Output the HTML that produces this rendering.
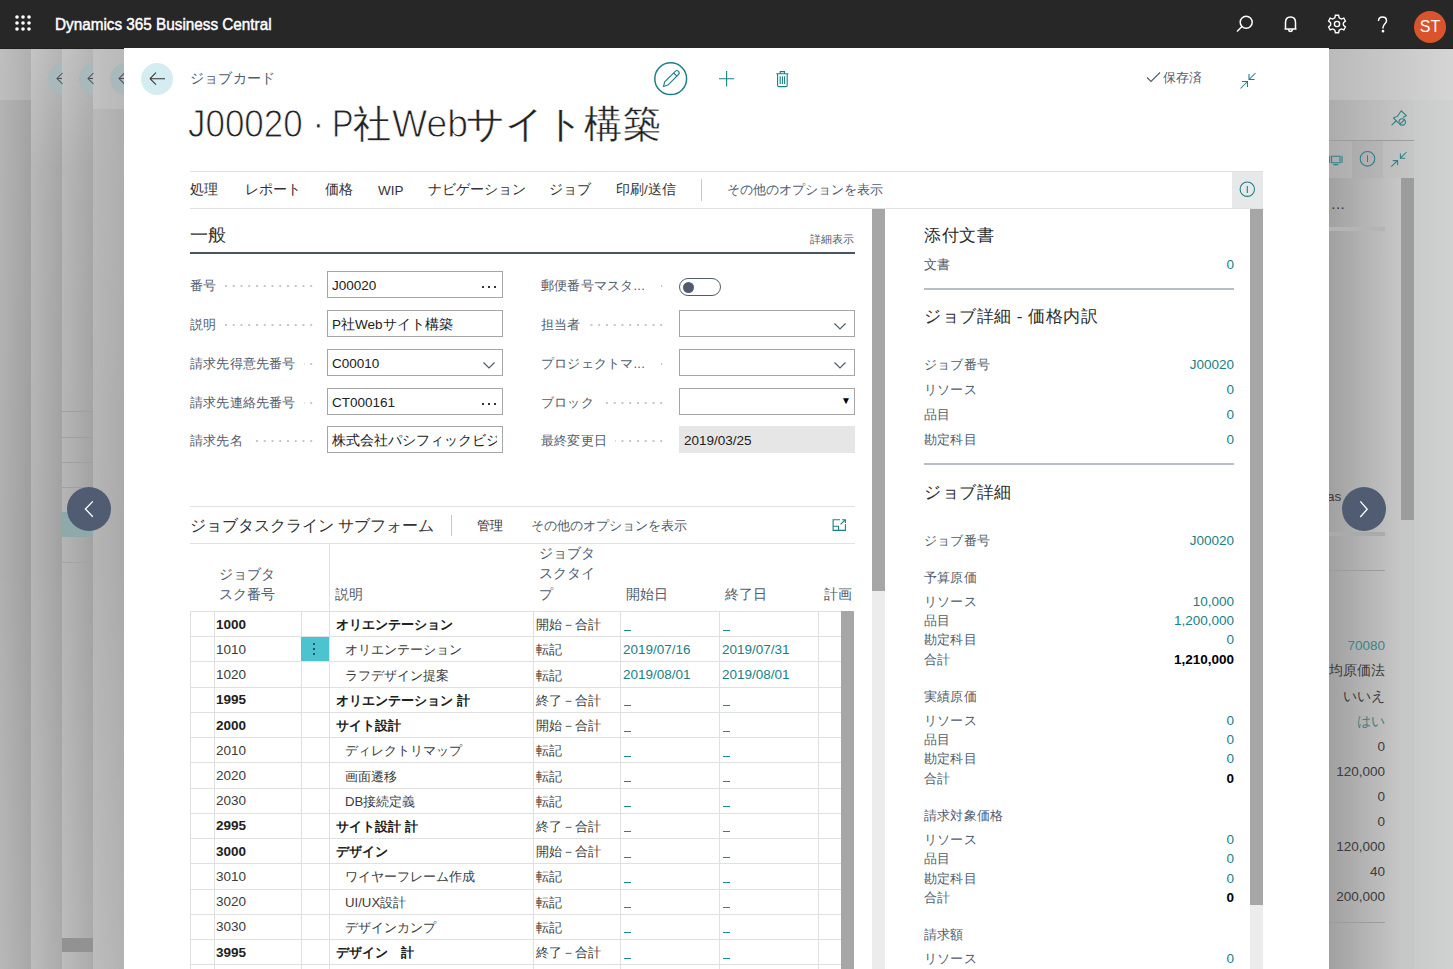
<!DOCTYPE html>
<html><head><meta charset="utf-8">
<style>
*{box-sizing:border-box;margin:0;padding:0}
html,body{width:1453px;height:969px;overflow:hidden;background:#b4b4b4;font-family:"Liberation Sans",sans-serif;color:#212121}
.a{position:absolute;white-space:nowrap}
#top{position:absolute;left:0;top:0;width:1453px;height:49px;background:#272727;border-bottom:1px solid #1f1f1f}
#card{position:absolute;left:124px;top:48px;width:1205px;height:921px;background:#fff;overflow:hidden}
.lbl{color:#505c6d;font-size:13.2px;letter-spacing:0.2px}
.dots{background-image:linear-gradient(90deg,#c6c6c6 1.6px,transparent 1.6px);background-size:7.75px 2px;background-position:right 0 top 0;background-repeat:repeat-x}
.teal{color:#00838a}
</style></head>
<body>
<!-- background strips -->
<div class="a" style="left:0;top:48px;width:31px;height:921px;background:linear-gradient(90deg,#b0b0b0,#9e9e9e)"></div>
<div class="a" style="left:31px;top:48px;width:31px;height:921px;background:linear-gradient(90deg,#b5b5b5,#a1a1a1)"></div>
<div class="a" style="left:62px;top:48px;width:31px;height:921px;background:linear-gradient(90deg,#b5b5b5,#a2a2a2)"></div>
<div class="a" style="left:93px;top:48px;width:31px;height:921px;background:linear-gradient(90deg,#b5b5b5,#aaaaaa)"></div>
<div class="a" style="left:0;top:48px;width:124px;height:921px;background:linear-gradient(180deg,rgba(255,255,255,.06),rgba(255,255,255,0) 55%,rgba(255,255,255,.1))"></div>
<div class="a" style="left:0;top:48px;width:31px;height:52px;background:rgba(255,255,255,.14)"></div>
<div class="a" style="left:31px;top:48px;width:62px;height:120px;background:linear-gradient(180deg,rgba(255,255,255,.16),rgba(255,255,255,0))"></div>
<div class="a" style="left:93px;top:48px;width:31px;height:61px;background:rgba(255,255,255,.13)"></div>
<div class="a" style="left:48px;top:63px;width:32px;height:32px;border-radius:50%;background:#a9b8ba;clip-path:inset(0 18px 0 0)"></div>
<div class="a" style="left:79px;top:63px;width:32px;height:32px;border-radius:50%;background:#a9b8ba;clip-path:inset(0 18px 0 0)"></div>
<div class="a" style="left:110px;top:63px;width:32px;height:32px;border-radius:50%;background:#a9b8ba;clip-path:inset(0 18px 0 0)"></div>
<svg class="a" style="left:0;top:48px" width="124" height="60" viewBox="0 48 124 60" fill="none" stroke="#4c5154" stroke-width="1.05"><path d="M62.5 73L57 78.5L62.5 84M62 78.5H57.5 M93.5 73L88 78.5L93.5 84M93 78.5H88.5 M124.5 73L119 78.5L124.5 84M124 78.5H119.5"/></svg>
<div class="a" style="left:62px;top:411px;width:31px;height:1px;background:#9f9f9f"></div>
<div class="a" style="left:62px;top:437px;width:31px;height:1px;background:#9f9f9f"></div>
<div class="a" style="left:62px;top:462px;width:31px;height:1px;background:#9f9f9f"></div>
<div class="a" style="left:62px;top:487px;width:31px;height:1px;background:#9f9f9f"></div>
<div class="a" style="left:62px;top:512px;width:31px;height:25px;background:#8fa9aa"></div>
<div class="a" style="left:62px;top:562px;width:31px;height:1px;background:#a3a3a3"></div>
<div class="a" style="left:62px;top:938px;width:31px;height:14px;background:#929292"></div>

<div class="a" style="left:1329px;top:48px;width:124px;height:921px;background:linear-gradient(90deg,#a0a0a0,#c7c7c7 72px,#c9caca 85px,#d0d1d1)"></div>
<div class="a" style="left:1329px;top:48px;width:124px;height:52px;background:linear-gradient(90deg,#bababa,#d5d5d5)"></div>
<div class="a" style="left:1329px;top:100px;width:85px;height:40px;background:linear-gradient(90deg,#acacac,#c9c9c9)"></div>
<div class="a" style="left:1329px;top:140px;width:85px;height:1px;background:#9c9c9c"></div>
<div class="a" style="left:1329px;top:141px;width:85px;height:37px;background:linear-gradient(90deg,#acacac,#c6c6c6)"></div>
<div class="a" style="left:1352px;top:141px;width:31px;height:37px;background:rgba(0,0,0,.035)"></div>
<div class="a" style="left:1401px;top:178px;width:13px;height:342px;background:#9c9c9c"></div>
<div class="a" style="left:1401px;top:520px;width:13px;height:449px;background:#c6c7c7"></div>
<div class="a" style="left:1329px;top:227px;width:56px;height:4px;background:#b4b4b4"></div>
<div class="a" style="left:1329px;top:532px;width:56px;height:4px;background:#aaaaaa"></div>
<div class="a" style="left:1329px;top:570px;width:56px;height:1px;background:#9c9c9c"></div>
<div class="a" style="left:1329px;top:922px;width:56px;height:1px;background:#9c9c9c"></div>
<div class="a" style="left:1331px;top:199px;font-size:14px;color:#333;letter-spacing:0">&middot;&middot;&middot;</div>
<div class="a" style="left:1327px;top:489px;font-size:13.5px;color:#3b3b3b">as</div>
<svg class="a" style="left:1329px;top:100px" width="90" height="80" viewBox="1329 100 90 80" fill="none" stroke="#2b8185" stroke-width="1.05">
<path d="M1391.5 125.3L1396 121 M1393.3 117.8L1397.4 116.4L1401.3 110.8L1406.3 115.6L1403 117.5 M1393.3 117.8L1398.6 123.2"/>
<circle cx="1402.2" cy="121.9" r="3.2"/><path d="M1400 124L1404.4 119.8"/>
<circle cx="1367.5" cy="158.8" r="7.3"/><path d="M1367.5 155.3V162"/>
<path d="M1391.2 166.6L1397.6 160.6M1392.8 160.6H1397.6V165.2 M1406.6 152L1400.4 158.2M1400.4 153.4V158.2H1405.2"/>
<path d="M1329.6 155.8V163 M1331.6 156.2H1340V162.8H1331.6Z M1333.4 164.6H1338.2 M1342 155.8V163"/>
</svg>
<div class="a" style="right:68px;top:637px;line-height:18px;font-size:13.5px;color:#3f8284">70080</div>
<div class="a" style="right:68px;top:662px;line-height:18px;font-size:13.5px;color:#3b3b3b">均原価法</div>
<div class="a" style="right:68px;top:688px;line-height:18px;font-size:13.5px;color:#3b3b3b">いいえ</div>
<div class="a" style="right:68px;top:713px;line-height:18px;font-size:13.5px;color:#3f8284">はい</div>
<div class="a" style="right:68px;top:738px;line-height:18px;font-size:13.5px;color:#3b3b3b">0</div>
<div class="a" style="right:68px;top:763px;line-height:18px;font-size:13.5px;color:#3b3b3b">120,000</div>
<div class="a" style="right:68px;top:788px;line-height:18px;font-size:13.5px;color:#3b3b3b">0</div>
<div class="a" style="right:68px;top:813px;line-height:18px;font-size:13.5px;color:#3b3b3b">0</div>
<div class="a" style="right:68px;top:838px;line-height:18px;font-size:13.5px;color:#3b3b3b">120,000</div>
<div class="a" style="right:68px;top:863px;line-height:18px;font-size:13.5px;color:#3b3b3b">40</div>
<div class="a" style="right:68px;top:888px;line-height:18px;font-size:13.5px;color:#3b3b3b">200,000</div>
<div id="top">
  <svg class="a" style="left:15px;top:15px" width="18" height="18" viewBox="0 0 18 18" fill="#fff">
    <circle cx="2" cy="2" r="1.8"/><circle cx="8" cy="2" r="1.8"/><circle cx="14" cy="2" r="1.8"/>
    <circle cx="2" cy="8" r="1.8"/><circle cx="8" cy="8" r="1.8"/><circle cx="14" cy="8" r="1.8"/>
    <circle cx="2" cy="14" r="1.8"/><circle cx="8" cy="14" r="1.8"/><circle cx="14" cy="14" r="1.8"/>
  </svg>
  <div class="a" style="left:55px;top:16px;font-size:16px;color:#fff;-webkit-text-stroke:0.45px #fff;transform-origin:0 0;transform:scaleX(0.955)">Dynamics 365 Business Central</div>
  <svg class="a" style="left:1233px;top:12px" width="24" height="24" viewBox="0 0 24 24" fill="none" stroke="#fff" stroke-width="1.5"><circle cx="13.2" cy="10.3" r="6"/><path d="M9 14.5L4 19.5"/></svg>
<svg class="a" style="left:1279px;top:12px" width="24" height="24" viewBox="0 0 24 24" fill="none" stroke="#fff" stroke-width="1.5"><path d="M6.5 17V10.5C6.5 7 8.7 5 11.5 5C14.3 5 16.5 7 16.5 10.5V17Z M5.5 17H17.5 M9.5 17.5C9.8 19 10.5 19.5 11.5 19.5C12.5 19.5 13.2 19 13.5 17.5"/></svg>
<svg class="a" style="left:1325px;top:12px" width="24" height="24" viewBox="-12 -12 24 24" fill="none" stroke="#fff" stroke-width="1.4"><path d="M-1.6,-8.2 L1.6,-8.2 L2.2,-5.6 L4.3,-4.4 L6.8,-5.3 L8.4,-2.5 L6.4,-0.7 L6.4,1.7 L8.4,3.5 L6.8,6.3 L4.3,5.4 L2.2,6.6 L1.6,9.2 L-1.6,9.2 L-2.2,6.6 L-4.3,5.4 L-6.8,6.3 L-8.4,3.5 L-6.4,1.7 L-6.4,-0.7 L-8.4,-2.5 L-6.8,-5.3 L-4.3,-4.4 L-2.2,-5.6 Z" transform="translate(0,-0.5)"/><circle cx="0" cy="0" r="2.6"/></svg>
<svg class="a" style="left:1371px;top:12px" width="24" height="24" viewBox="0 0 24 24" fill="none" stroke="#fff" stroke-width="1.5"><path d="M7.5 9C7.5 6.5 9.3 5 11.5 5C13.8 5 15.5 6.5 15.5 8.7C15.5 11.5 12 12 12 15.5V16.5"/><circle cx="12" cy="19.2" r="0.6" fill="#fff"/></svg>
<div class="a" style="left:1414px;top:11px;width:32px;height:32px;border-radius:50%;background:#d9542b;color:#fff;font-size:16px;text-align:center;line-height:32px">ST</div>
</div>

<div id="card"></div>
<!-- card header -->
<div class="a" style="left:141px;top:62.7px;width:32px;height:32px;border-radius:50%;background:#d4edf1"></div>
<svg class="a" style="left:147px;top:69px" width="20" height="20" viewBox="0 0 20 20" fill="none" stroke="#333" stroke-width="1.05"><path d="M3 9.7H18M3 9.7L9 3.7M3 9.7L9 15.7"/></svg>
<div class="a lbl" style="left:190px;top:70px;line-height:18px;font-size:13.5px">ジョブカード</div>
<svg class="a" style="left:650px;top:58px" width="160" height="42" viewBox="650 58 160 42" fill="none" stroke="#1a7f86" stroke-width="1.2">
<circle cx="670.7" cy="78.7" r="15.9" stroke-width="1.5"/>
<path d="M663.5 86.5L664.7 81.9L675.3 71.3Q676.9 69.7 678.5 71.3Q680.1 72.9 678.5 74.5L667.9 85.1Z M673.6 73L676.8 76.2" stroke-width="1.1"/>
<path d="M726.6 71V86.5M719 78.7H734.2" stroke-width="1.1"/>
<path d="M776.3 73.8H788.4M780.2 73.8V71.6H784.5V73.8M777.6 73.8V85.2Q777.6 86.6 779 86.6H785.8Q787.2 86.6 787.2 85.2V73.8M780.2 76.2V84M782.4 76.2V84M784.6 76.2V84" stroke-width="1.1"/>
</svg>
<svg class="a" style="left:1144px;top:70px" width="18" height="16" viewBox="0 0 18 16" fill="none" stroke="#505c6d" stroke-width="1.1"><path d="M3 7.5L7 11.5L16 2.5"/></svg>
<div class="a lbl" style="left:1163px;top:69px;line-height:18px;font-size:13.3px">保存済</div>
<svg class="a" style="left:1236px;top:68px" width="24" height="24" viewBox="1236 68 24 24" fill="none" stroke="#1a7f86" stroke-width="1.05"><path d="M1240.5 88.5L1247.5 81.5M1242 81.5H1247.5V87 M1255.5 73L1249 79.5M1249 74V79.5H1254.5"/></svg>
<div class="a" style="left:188px;top:104px;font-size:38px;line-height:40px;color:#222;-webkit-text-stroke:0.9px #fff;transform-origin:0 0;transform:scaleX(0.92)">J00020</div>
<div class="a" style="left:312px;top:104px;font-size:38px;line-height:40px;color:#222;-webkit-text-stroke:0.9px #fff">&middot;</div>
<div class="a" style="left:332px;top:104px;font-size:38px;line-height:40px;color:#222;-webkit-text-stroke:0.9px #fff;transform-origin:0 0;transform:scaleX(0.85)">P</div>
<div class="a" style="left:353px;top:104px;font-size:38px;line-height:40px;color:#222;-webkit-text-stroke:0.3px #fff">社</div>
<div class="a" style="left:392px;top:104px;font-size:38px;line-height:40px;color:#222;-webkit-text-stroke:0.9px #fff;transform-origin:0 0;transform:scaleX(0.98)">Web</div>
<div class="a" style="left:466px;top:104px;font-size:38px;line-height:40px;color:#222;-webkit-text-stroke:0.3px #fff;letter-spacing:0.4px">サイト構築</div>


<!-- action bar -->
<div class="a" style="left:190px;top:171px;width:1073px;height:1px;background:#e1e1e1"></div>
<div class="a" style="left:190px;top:208px;width:1073px;height:1px;background:#e1e1e1"></div>
<div class="a" style="left:1232px;top:172px;width:31px;height:36px;background:#e7e8ea"></div>
<svg class="a" style="left:1237px;top:179px" width="20" height="20" viewBox="0 0 20 20" fill="none" stroke="#1a7f86" stroke-width="1.1"><circle cx="10.3" cy="10.2" r="7.2"/><path d="M10.3 7V14"/></svg>
<div class="a" style="left:190px;top:181px;font-size:13.5px;color:#333">処理</div>
<div class="a" style="left:245px;top:181px;font-size:13.5px;color:#333">レポート</div>
<div class="a" style="left:325px;top:181px;font-size:13.5px;color:#333">価格</div>
<div class="a" style="left:378px;top:183px;font-size:13.5px;color:#333">WIP</div>
<div class="a" style="left:428px;top:181px;font-size:13.5px;color:#333">ナビゲーション</div>
<div class="a" style="left:549px;top:181px;font-size:13.5px;color:#333">ジョブ</div>
<div class="a" style="left:616px;top:181px;font-size:13.5px;color:#333">印刷/送信</div>
<div class="a" style="left:701px;top:179px;width:1px;height:22px;background:#c8c8c8"></div>
<div class="a" style="left:727px;top:181px;font-size:13.2px;color:#505c6d">その他のオプションを表示</div>
<!-- general -->
<div class="a" style="left:190px;top:225px;line-height:20px;font-size:17.5px;color:#333">一般</div>
<div class="a" style="right:599px;top:232px;line-height:14px;font-size:11.3px;color:#505c6d">詳細表示</div>
<div class="a" style="left:190px;top:252px;width:665px;height:2px;background:#4a5468"></div>
<!-- SCROLLBARS -->
<div class="a" style="left:872px;top:209px;width:13px;height:760px;background:#ececec"></div>
<div class="a" style="left:872px;top:209px;width:13px;height:382px;background:#a6a6a6"></div>
<div class="a" style="left:1250px;top:209px;width:13px;height:760px;background:#ececec"></div>
<div class="a" style="left:1250px;top:209px;width:13px;height:696px;background:#a6a6a6"></div>
<!-- FIELDS -->
<div class="a dots" style="left:190px;top:285px;width:128px;height:2px"></div><div class="a lbl" style="left:190px;top:277px;height:18px;line-height:18px;padding-right:8px;background:#fff">番号</div><div class="a" style="left:327px;top:271px;width:176px;height:27px;background:#fff;border:1px solid #a6a6a6"></div><div class="a" style="left:332px;top:277px;height:18px;line-height:18px;font-size:13.5px;color:#212121;width:165px;overflow:hidden">J00020</div><div class="a" style="left:482px;top:286px;width:2px;height:2px;background:#333"></div><div class="a" style="left:488px;top:286px;width:2px;height:2px;background:#333"></div><div class="a" style="left:494px;top:286px;width:2px;height:2px;background:#333"></div>
<div class="a dots" style="left:190px;top:324px;width:128px;height:2px"></div><div class="a lbl" style="left:190px;top:316px;height:18px;line-height:18px;padding-right:8px;background:#fff">説明</div><div class="a" style="left:327px;top:310px;width:176px;height:27px;background:#fff;border:1px solid #a6a6a6"></div><div class="a" style="left:332px;top:316px;height:18px;line-height:18px;font-size:13.5px;color:#212121;width:165px;overflow:hidden">P社Webサイト構築</div>
<div class="a dots" style="left:190px;top:363px;width:128px;height:2px"></div><div class="a lbl" style="left:190px;top:355px;height:18px;line-height:18px;padding-right:8px;background:#fff">請求先得意先番号</div><div class="a" style="left:327px;top:349px;width:176px;height:27px;background:#fff;border:1px solid #a6a6a6"></div><div class="a" style="left:332px;top:355px;height:18px;line-height:18px;font-size:13.5px;color:#212121;width:165px;overflow:hidden">C00010</div><svg class="a" style="left:482px;top:360px" width="14" height="10" viewBox="0 0 14 10" fill="none" stroke="#505c6d" stroke-width="1.2"><path d="M1.5 2.5L7 8L12.5 2.5"/></svg>
<div class="a dots" style="left:190px;top:401.5px;width:128px;height:2px"></div><div class="a lbl" style="left:190px;top:393.5px;height:18px;line-height:18px;padding-right:8px;background:#fff">請求先連絡先番号</div><div class="a" style="left:327px;top:387.5px;width:176px;height:27px;background:#fff;border:1px solid #a6a6a6"></div><div class="a" style="left:332px;top:393.5px;height:18px;line-height:18px;font-size:13.5px;color:#212121;width:165px;overflow:hidden">CT000161</div><div class="a" style="left:482px;top:402.5px;width:2px;height:2px;background:#333"></div><div class="a" style="left:488px;top:402.5px;width:2px;height:2px;background:#333"></div><div class="a" style="left:494px;top:402.5px;width:2px;height:2px;background:#333"></div>
<div class="a dots" style="left:190px;top:440px;width:128px;height:2px"></div><div class="a lbl" style="left:190px;top:432px;height:18px;line-height:18px;padding-right:8px;background:#fff">請求先名</div><div class="a" style="left:327px;top:426px;width:176px;height:27px;background:#fff;border:1px solid #a6a6a6"></div><div class="a" style="left:332px;top:432px;height:18px;line-height:18px;font-size:13.5px;color:#212121;width:165px;overflow:hidden">株式会社パシフィックビジ:</div>
<div class="a dots" style="left:541px;top:285px;width:127px;height:2px"></div><div class="a lbl" style="left:541px;top:277px;height:18px;line-height:18px;padding-right:8px;min-width:120px;background:#fff">郵便番号マスタ...</div><div class="a" style="left:679px;top:278px;width:42px;height:18px;border-radius:9px;border:1.2px solid #505c6d"></div><div class="a" style="left:683px;top:282px;width:11px;height:11px;border-radius:50%;background:#505c6d"></div>
<div class="a dots" style="left:541px;top:324px;width:127px;height:2px"></div><div class="a lbl" style="left:541px;top:316px;height:18px;line-height:18px;padding-right:8px;background:#fff">担当者</div><div class="a" style="left:679px;top:310px;width:176px;height:27px;background:#fff;border:1px solid #a6a6a6"></div><svg class="a" style="left:833px;top:321px" width="14" height="10" viewBox="0 0 14 10" fill="none" stroke="#505c6d" stroke-width="1.2"><path d="M1.5 2.5L7 8L12.5 2.5"/></svg>
<div class="a dots" style="left:541px;top:363px;width:127px;height:2px"></div><div class="a lbl" style="left:541px;top:355px;height:18px;line-height:18px;padding-right:8px;min-width:120px;background:#fff">プロジェクトマ...</div><div class="a" style="left:679px;top:349px;width:176px;height:27px;background:#fff;border:1px solid #a6a6a6"></div><svg class="a" style="left:833px;top:360px" width="14" height="10" viewBox="0 0 14 10" fill="none" stroke="#505c6d" stroke-width="1.2"><path d="M1.5 2.5L7 8L12.5 2.5"/></svg>
<div class="a dots" style="left:541px;top:401.5px;width:127px;height:2px"></div><div class="a lbl" style="left:541px;top:393.5px;height:18px;line-height:18px;padding-right:8px;background:#fff">ブロック</div><div class="a" style="left:679px;top:387.5px;width:176px;height:27px;background:#fff;border:1px solid #a6a6a6"></div><div class="a" style="left:841px;top:394.5px;font-size:10px;color:#000">&#9660;</div>
<div class="a dots" style="left:541px;top:440px;width:127px;height:2px"></div><div class="a lbl" style="left:541px;top:432px;height:18px;line-height:18px;padding-right:8px;background:#fff">最終変更日</div><div class="a" style="left:679px;top:426px;width:176px;height:27px;background:#e6e6e6;border:1px solid #e6e6e6"></div><div class="a" style="left:684px;top:432px;height:18px;line-height:18px;font-size:13.5px;color:#212121;">2019/03/25</div>
<!-- SUBFORM -->
<div class="a" style="left:190px;top:506px;width:665px;height:1px;background:#e1e1e1"></div>
<div class="a" style="left:190px;top:543px;width:665px;height:1px;background:#e1e1e1"></div>
<div class="a" style="left:190px;top:516px;line-height:20px;font-size:15.5px;color:#333">ジョブタスクライン サブフォーム</div>
<div class="a" style="left:451px;top:515px;width:1px;height:21px;background:#c8c8c8"></div>
<div class="a" style="left:477px;top:517px;line-height:18px;font-size:13.2px;color:#333">管理</div>
<div class="a" style="left:531px;top:517px;line-height:18px;font-size:13.2px;color:#505c6d">その他のオプションを表示</div>
<svg class="a" style="left:828px;top:515px" width="22" height="20" viewBox="828 515 22 20" fill="none" stroke="#1a7f86" stroke-width="1.1"><path d="M840 519.7H833.1V530.4H845.4V524.3 M833.1 526.3H838.6V530.4 M840.6 524.4L845.2 519.8 M842.2 519.7H845.4V522.9"/></svg>
<div class="a" style="left:329px;top:544px;width:1px;height:68px;background:#e1e1e1"></div>
<div class="a" style="left:219px;top:566px;line-height:18px;font-size:13.5px;color:#505c6d">ジョブタ</div>
<div class="a" style="left:219px;top:586px;line-height:18px;font-size:13.5px;color:#505c6d">スク番号</div>
<div class="a" style="left:335px;top:586px;line-height:18px;font-size:13.5px;color:#505c6d">説明</div>
<div class="a" style="left:539px;top:545px;line-height:18px;font-size:13.5px;color:#505c6d">ジョブタ</div>
<div class="a" style="left:539px;top:565px;line-height:18px;font-size:13.5px;color:#505c6d">スクタイ</div>
<div class="a" style="left:539px;top:586px;line-height:18px;font-size:13.5px;color:#505c6d">プ</div>
<div class="a" style="left:626px;top:586px;line-height:18px;font-size:13.5px;color:#505c6d">開始日</div>
<div class="a" style="left:725px;top:586px;line-height:18px;font-size:13.5px;color:#505c6d">終了日</div>
<div class="a" style="left:824px;top:586px;line-height:18px;font-size:13.5px;color:#505c6d">計画</div>
<div class="a" style="left:190px;top:611px;width:651px;height:1px;background:#e0e0e0"></div>
<div class="a" style="left:190px;top:611px;width:1px;height:358px;background:#e0e0e0"></div>
<div class="a" style="left:214px;top:611px;width:1px;height:358px;background:#e0e0e0"></div>
<div class="a" style="left:301px;top:611px;width:1px;height:358px;background:#e0e0e0"></div>
<div class="a" style="left:329px;top:611px;width:1px;height:358px;background:#e0e0e0"></div>
<div class="a" style="left:533px;top:611px;width:1px;height:358px;background:#e0e0e0"></div>
<div class="a" style="left:620px;top:611px;width:1px;height:358px;background:#e0e0e0"></div>
<div class="a" style="left:719px;top:611px;width:1px;height:358px;background:#e0e0e0"></div>
<div class="a" style="left:818px;top:611px;width:1px;height:358px;background:#e0e0e0"></div>
<div class="a" style="left:190px;top:636px;width:651px;height:1px;background:#e0e0e0"></div>
<div class="a" style="left:216px;top:615.62px;line-height:18px;font-size:13.5px;font-weight:bold;color:#212121">1000</div>
<div class="a" style="left:336px;top:616.12px;line-height:18px;font-size:13.2px;font-weight:bold;color:#212121">オリエンテーション</div>
<div class="a" style="left:536px;top:616.12px;line-height:18px;font-size:13.2px;color:#3b3b3b">開始－合計</div>
<div class="a" style="left:624px;top:630px;width:7px;height:1px;background:#1a8a90"></div>
<div class="a" style="left:723px;top:630px;width:7px;height:1px;background:#1a8a90"></div>
<div class="a" style="left:190px;top:661px;width:651px;height:1px;background:#e0e0e0"></div>
<div class="a" style="left:216px;top:640.85px;line-height:18px;font-size:13.5px;font-weight:normal;color:#3b3b3b">1010</div>
<div class="a" style="left:345px;top:641.35px;line-height:18px;font-size:13.2px;font-weight:normal;color:#3b3b3b">オリエンテーション</div>
<div class="a" style="left:536px;top:641.35px;line-height:18px;font-size:13.2px;color:#3b3b3b">転記</div>
<div class="a" style="left:623px;top:640.85px;line-height:18px;font-size:13.5px;color:#1a7f86">2019/07/16</div>
<div class="a" style="left:722px;top:640.85px;line-height:18px;font-size:13.5px;color:#1a7f86">2019/07/31</div>
<div class="a" style="left:190px;top:687px;width:651px;height:1px;background:#e0e0e0"></div>
<div class="a" style="left:216px;top:666.08px;line-height:18px;font-size:13.5px;font-weight:normal;color:#3b3b3b">1020</div>
<div class="a" style="left:345px;top:666.58px;line-height:18px;font-size:13.2px;font-weight:normal;color:#3b3b3b">ラフデザイン提案</div>
<div class="a" style="left:536px;top:666.58px;line-height:18px;font-size:13.2px;color:#3b3b3b">転記</div>
<div class="a" style="left:623px;top:666.08px;line-height:18px;font-size:13.5px;color:#1a7f86">2019/08/01</div>
<div class="a" style="left:722px;top:666.08px;line-height:18px;font-size:13.5px;color:#1a7f86">2019/08/01</div>
<div class="a" style="left:190px;top:712px;width:651px;height:1px;background:#e0e0e0"></div>
<div class="a" style="left:216px;top:691.31px;line-height:18px;font-size:13.5px;font-weight:bold;color:#212121">1995</div>
<div class="a" style="left:336px;top:691.81px;line-height:18px;font-size:13.2px;font-weight:bold;color:#212121">オリエンテーション 計</div>
<div class="a" style="left:536px;top:691.81px;line-height:18px;font-size:13.2px;color:#3b3b3b">終了－合計</div>
<div class="a" style="left:624px;top:705px;width:7px;height:1px;background:#1a8a90"></div>
<div class="a" style="left:723px;top:705px;width:7px;height:1px;background:#1a8a90"></div>
<div class="a" style="left:190px;top:737px;width:651px;height:1px;background:#e0e0e0"></div>
<div class="a" style="left:216px;top:716.53px;line-height:18px;font-size:13.5px;font-weight:bold;color:#212121">2000</div>
<div class="a" style="left:336px;top:717.03px;line-height:18px;font-size:13.2px;font-weight:bold;color:#212121">サイト設計</div>
<div class="a" style="left:536px;top:717.03px;line-height:18px;font-size:13.2px;color:#3b3b3b">開始－合計</div>
<div class="a" style="left:624px;top:731px;width:7px;height:1px;background:#1a8a90"></div>
<div class="a" style="left:723px;top:731px;width:7px;height:1px;background:#1a8a90"></div>
<div class="a" style="left:190px;top:762px;width:651px;height:1px;background:#e0e0e0"></div>
<div class="a" style="left:216px;top:741.76px;line-height:18px;font-size:13.5px;font-weight:normal;color:#3b3b3b">2010</div>
<div class="a" style="left:345px;top:742.26px;line-height:18px;font-size:13.2px;font-weight:normal;color:#3b3b3b">ディレクトリマップ</div>
<div class="a" style="left:536px;top:742.26px;line-height:18px;font-size:13.2px;color:#3b3b3b">転記</div>
<div class="a" style="left:624px;top:756px;width:7px;height:1px;background:#1a8a90"></div>
<div class="a" style="left:723px;top:756px;width:7px;height:1px;background:#1a8a90"></div>
<div class="a" style="left:190px;top:788px;width:651px;height:1px;background:#e0e0e0"></div>
<div class="a" style="left:216px;top:767.00px;line-height:18px;font-size:13.5px;font-weight:normal;color:#3b3b3b">2020</div>
<div class="a" style="left:345px;top:767.50px;line-height:18px;font-size:13.2px;font-weight:normal;color:#3b3b3b">画面遷移</div>
<div class="a" style="left:536px;top:767.50px;line-height:18px;font-size:13.2px;color:#3b3b3b">転記</div>
<div class="a" style="left:624px;top:781px;width:7px;height:1px;background:#1a8a90"></div>
<div class="a" style="left:723px;top:781px;width:7px;height:1px;background:#1a8a90"></div>
<div class="a" style="left:190px;top:813px;width:651px;height:1px;background:#e0e0e0"></div>
<div class="a" style="left:216px;top:792.23px;line-height:18px;font-size:13.5px;font-weight:normal;color:#3b3b3b">2030</div>
<div class="a" style="left:345px;top:792.73px;line-height:18px;font-size:13.2px;font-weight:normal;color:#3b3b3b">DB接続定義</div>
<div class="a" style="left:536px;top:792.73px;line-height:18px;font-size:13.2px;color:#3b3b3b">転記</div>
<div class="a" style="left:624px;top:806px;width:7px;height:1px;background:#1a8a90"></div>
<div class="a" style="left:723px;top:806px;width:7px;height:1px;background:#1a8a90"></div>
<div class="a" style="left:190px;top:838px;width:651px;height:1px;background:#e0e0e0"></div>
<div class="a" style="left:216px;top:817.46px;line-height:18px;font-size:13.5px;font-weight:bold;color:#212121">2995</div>
<div class="a" style="left:336px;top:817.96px;line-height:18px;font-size:13.2px;font-weight:bold;color:#212121">サイト設計 計</div>
<div class="a" style="left:536px;top:817.96px;line-height:18px;font-size:13.2px;color:#3b3b3b">終了－合計</div>
<div class="a" style="left:624px;top:831px;width:7px;height:1px;background:#1a8a90"></div>
<div class="a" style="left:723px;top:831px;width:7px;height:1px;background:#1a8a90"></div>
<div class="a" style="left:190px;top:863px;width:651px;height:1px;background:#e0e0e0"></div>
<div class="a" style="left:216px;top:842.68px;line-height:18px;font-size:13.5px;font-weight:bold;color:#212121">3000</div>
<div class="a" style="left:336px;top:843.18px;line-height:18px;font-size:13.2px;font-weight:bold;color:#212121">デザイン</div>
<div class="a" style="left:536px;top:843.18px;line-height:18px;font-size:13.2px;color:#3b3b3b">開始－合計</div>
<div class="a" style="left:624px;top:857px;width:7px;height:1px;background:#1a8a90"></div>
<div class="a" style="left:723px;top:857px;width:7px;height:1px;background:#1a8a90"></div>
<div class="a" style="left:190px;top:889px;width:651px;height:1px;background:#e0e0e0"></div>
<div class="a" style="left:216px;top:867.91px;line-height:18px;font-size:13.5px;font-weight:normal;color:#3b3b3b">3010</div>
<div class="a" style="left:345px;top:868.41px;line-height:18px;font-size:13.2px;font-weight:normal;color:#3b3b3b">ワイヤーフレーム作成</div>
<div class="a" style="left:536px;top:868.41px;line-height:18px;font-size:13.2px;color:#3b3b3b">転記</div>
<div class="a" style="left:624px;top:882px;width:7px;height:1px;background:#1a8a90"></div>
<div class="a" style="left:723px;top:882px;width:7px;height:1px;background:#1a8a90"></div>
<div class="a" style="left:190px;top:914px;width:651px;height:1px;background:#e0e0e0"></div>
<div class="a" style="left:216px;top:893.14px;line-height:18px;font-size:13.5px;font-weight:normal;color:#3b3b3b">3020</div>
<div class="a" style="left:345px;top:893.64px;line-height:18px;font-size:13.2px;font-weight:normal;color:#3b3b3b">UI/UX設計</div>
<div class="a" style="left:536px;top:893.64px;line-height:18px;font-size:13.2px;color:#3b3b3b">転記</div>
<div class="a" style="left:624px;top:907px;width:7px;height:1px;background:#1a8a90"></div>
<div class="a" style="left:723px;top:907px;width:7px;height:1px;background:#1a8a90"></div>
<div class="a" style="left:190px;top:939px;width:651px;height:1px;background:#e0e0e0"></div>
<div class="a" style="left:216px;top:918.38px;line-height:18px;font-size:13.5px;font-weight:normal;color:#3b3b3b">3030</div>
<div class="a" style="left:345px;top:918.88px;line-height:18px;font-size:13.2px;font-weight:normal;color:#3b3b3b">デザインカンプ</div>
<div class="a" style="left:536px;top:918.88px;line-height:18px;font-size:13.2px;color:#3b3b3b">転記</div>
<div class="a" style="left:624px;top:932px;width:7px;height:1px;background:#1a8a90"></div>
<div class="a" style="left:723px;top:932px;width:7px;height:1px;background:#1a8a90"></div>
<div class="a" style="left:190px;top:964px;width:651px;height:1px;background:#e0e0e0"></div>
<div class="a" style="left:216px;top:943.61px;line-height:18px;font-size:13.5px;font-weight:bold;color:#212121">3995</div>
<div class="a" style="left:336px;top:944.11px;line-height:18px;font-size:13.2px;font-weight:bold;color:#212121">デザイン　計</div>
<div class="a" style="left:536px;top:944.11px;line-height:18px;font-size:13.2px;color:#3b3b3b">終了－合計</div>
<div class="a" style="left:624px;top:958px;width:7px;height:1px;background:#1a8a90"></div>
<div class="a" style="left:723px;top:958px;width:7px;height:1px;background:#1a8a90"></div>
<div class="a" style="left:190px;top:989px;width:651px;height:1px;background:#e0e0e0"></div>
<div class="a" style="left:216px;top:968.84px;line-height:18px;font-size:13.5px;font-weight:bold;color:#212121">4000</div>
<div class="a" style="left:336px;top:969.34px;line-height:18px;font-size:13.2px;font-weight:bold;color:#212121"></div>
<div class="a" style="left:536px;top:969.34px;line-height:18px;font-size:13.2px;color:#3b3b3b"></div>
<div class="a" style="left:301px;top:637px;width:28px;height:24px;background:#4ec3d0"></div>
<div class="a" style="left:313px;top:643px;width:2px;height:2px;background:#1c5a60;box-shadow:0 5px 0 #1c5a60,0 10px 0 #1c5a60"></div>
<div class="a" style="left:841px;top:611px;width:13px;height:358px;background:#a6a6a6"></div>
<!-- FACTBOX -->
<div class="a" style="left:924px;top:225px;line-height:22px;font-size:17px;letter-spacing:0.5px;color:#2b2b2b">添付文書</div>
<div class="a lbl" style="left:924px;top:256px;line-height:18px">文書</div>
<div class="a" style="right:219px;top:256px;line-height:18px;font-size:13.5px;color:#1a7f86">0</div>
<div class="a" style="left:924px;top:288px;width:310px;height:2px;background:#b9bec6"></div>
<div class="a" style="left:924px;top:306px;line-height:22px;font-size:17px;letter-spacing:0.5px;color:#2b2b2b">ジョブ詳細 - 価格内訳</div>
<div class="a lbl" style="left:924px;top:356px;line-height:18px">ジョブ番号</div>
<div class="a" style="right:219px;top:356px;line-height:18px;font-size:13.5px;color:#1a7f86">J00020</div>
<div class="a lbl" style="left:924px;top:381px;line-height:18px">リソース</div>
<div class="a" style="right:219px;top:381px;line-height:18px;font-size:13.5px;color:#1a7f86">0</div>
<div class="a lbl" style="left:924px;top:406px;line-height:18px">品目</div>
<div class="a" style="right:219px;top:406px;line-height:18px;font-size:13.5px;color:#1a7f86">0</div>
<div class="a lbl" style="left:924px;top:431px;line-height:18px">勘定科目</div>
<div class="a" style="right:219px;top:431px;line-height:18px;font-size:13.5px;color:#1a7f86">0</div>
<div class="a" style="left:924px;top:463px;width:310px;height:2px;background:#b9bec6"></div>
<div class="a" style="left:924px;top:482px;line-height:22px;font-size:17px;letter-spacing:0.5px;color:#2b2b2b">ジョブ詳細</div>
<div class="a lbl" style="left:924px;top:532px;line-height:18px">ジョブ番号</div>
<div class="a" style="right:219px;top:532px;line-height:18px;font-size:13.5px;color:#1a7f86">J00020</div>
<div class="a lbl" style="left:924px;top:569px;line-height:18px">予算原価</div>
<div class="a lbl" style="left:924px;top:593px;line-height:18px">リソース</div>
<div class="a" style="right:219px;top:593px;line-height:18px;font-size:13.5px;color:#1a7f86">10,000</div>
<div class="a lbl" style="left:924px;top:612px;line-height:18px">品目</div>
<div class="a" style="right:219px;top:612px;line-height:18px;font-size:13.5px;color:#1a7f86">1,200,000</div>
<div class="a lbl" style="left:924px;top:631px;line-height:18px">勘定科目</div>
<div class="a" style="right:219px;top:631px;line-height:18px;font-size:13.5px;color:#1a7f86">0</div>
<div class="a lbl" style="left:924px;top:651px;line-height:18px">合計</div>
<div class="a" style="right:219px;top:651px;line-height:18px;font-size:13.5px;color:#000;font-weight:bold">1,210,000</div>
<div class="a lbl" style="left:924px;top:688px;line-height:18px">実績原価</div>
<div class="a lbl" style="left:924px;top:712px;line-height:18px">リソース</div>
<div class="a" style="right:219px;top:712px;line-height:18px;font-size:13.5px;color:#1a7f86">0</div>
<div class="a lbl" style="left:924px;top:731px;line-height:18px">品目</div>
<div class="a" style="right:219px;top:731px;line-height:18px;font-size:13.5px;color:#1a7f86">0</div>
<div class="a lbl" style="left:924px;top:750px;line-height:18px">勘定科目</div>
<div class="a" style="right:219px;top:750px;line-height:18px;font-size:13.5px;color:#1a7f86">0</div>
<div class="a lbl" style="left:924px;top:770px;line-height:18px">合計</div>
<div class="a" style="right:219px;top:770px;line-height:18px;font-size:13.5px;color:#000;font-weight:bold">0</div>
<div class="a lbl" style="left:924px;top:807px;line-height:18px">請求対象価格</div>
<div class="a lbl" style="left:924px;top:831px;line-height:18px">リソース</div>
<div class="a" style="right:219px;top:831px;line-height:18px;font-size:13.5px;color:#1a7f86">0</div>
<div class="a lbl" style="left:924px;top:850px;line-height:18px">品目</div>
<div class="a" style="right:219px;top:850px;line-height:18px;font-size:13.5px;color:#1a7f86">0</div>
<div class="a lbl" style="left:924px;top:870px;line-height:18px">勘定科目</div>
<div class="a" style="right:219px;top:870px;line-height:18px;font-size:13.5px;color:#1a7f86">0</div>
<div class="a lbl" style="left:924px;top:889px;line-height:18px">合計</div>
<div class="a" style="right:219px;top:889px;line-height:18px;font-size:13.5px;color:#000;font-weight:bold">0</div>
<div class="a lbl" style="left:924px;top:926px;line-height:18px">請求額</div>
<div class="a lbl" style="left:924px;top:950px;line-height:18px">リソース</div>
<div class="a" style="right:219px;top:950px;line-height:18px;font-size:13.5px;color:#1a7f86">0</div>
<!-- BG DETAILS -->
<!-- nav circles -->
<div class="a" style="left:67px;top:487px;width:44px;height:44px;border-radius:50%;background:#505c72"></div>
<svg class="a" style="left:67px;top:487px" width="44" height="44" viewBox="0 0 44 44" fill="none" stroke="#fff" stroke-width="1.3"><path d="M25.8 14.4L18.4 22L25.8 29.8"/></svg>
<div class="a" style="left:1342px;top:487px;width:44px;height:44px;border-radius:50%;background:#505c72"></div>
<svg class="a" style="left:1342px;top:487px" width="44" height="44" viewBox="0 0 44 44" fill="none" stroke="#fff" stroke-width="1.3"><path d="M18.3 14.4L25.2 22.3L18.3 30"/></svg>
</body></html>
